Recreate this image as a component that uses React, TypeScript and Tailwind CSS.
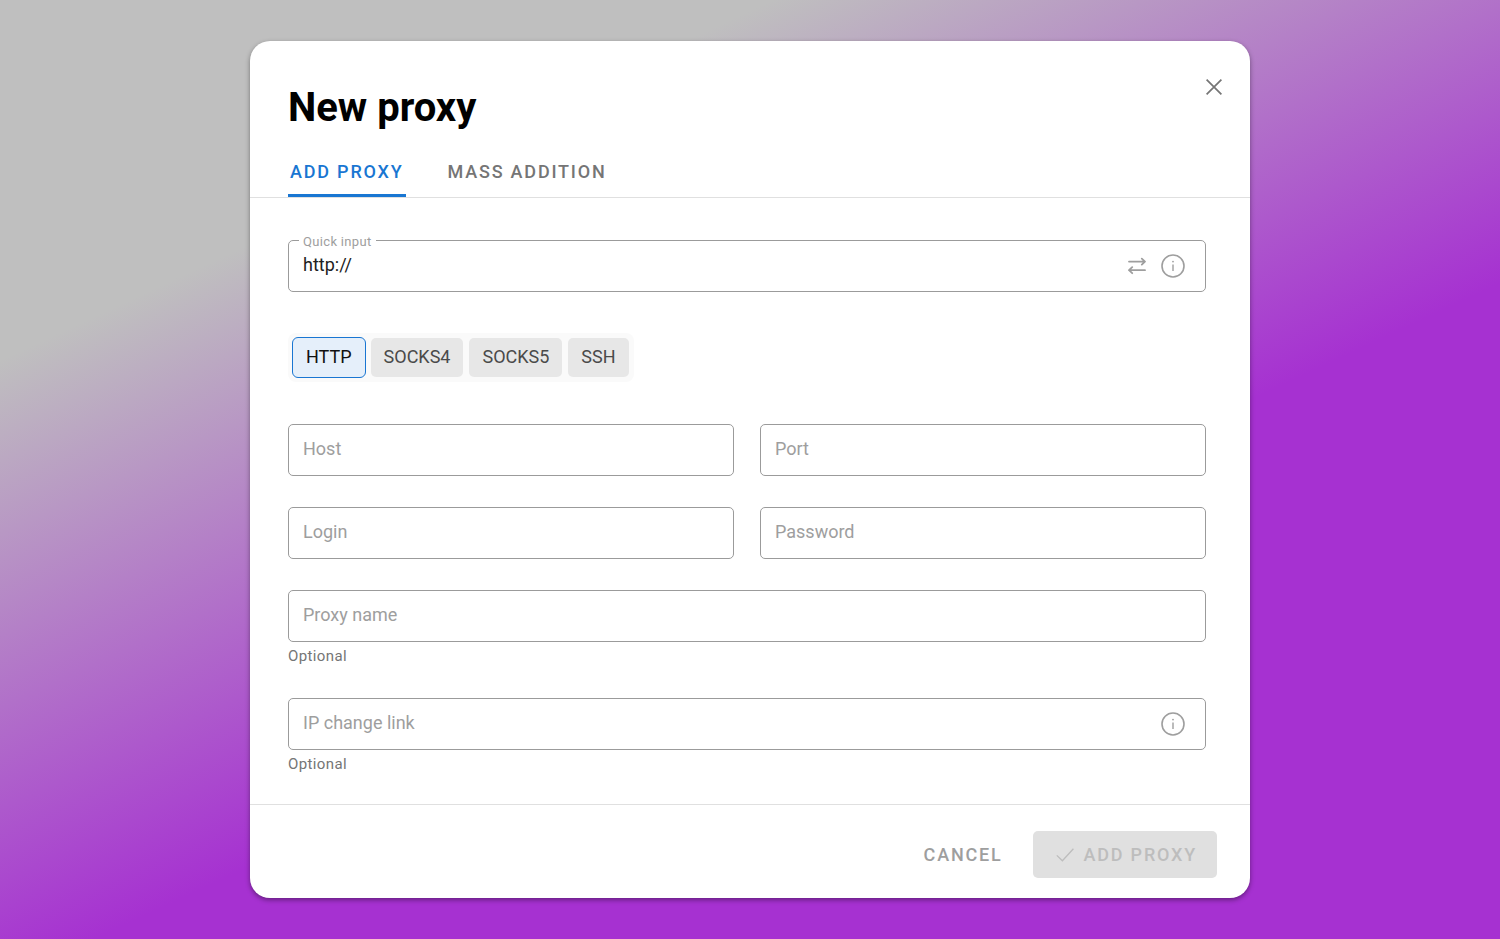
import React, { useState } from 'react';

const CloseIcon = () => (
  <svg className="size-4" viewBox="0 0 16 16" fill="none" stroke="currentColor" strokeWidth="1.7" aria-hidden="true">
    <path d="M0.6 0.6L15.4 15.4M15.4 0.6L0.6 15.4" />
  </svg>
);

const InfoIcon = () => (
  <svg className="size-6" viewBox="0 0 24 24" fill="none" stroke="currentColor" strokeWidth="1.6" aria-hidden="true">
    <circle cx="12" cy="12" r="11" />
    <path d="M12 10.4V17" strokeWidth="1.4" />
    <circle cx="12" cy="7.6" r="0.9" fill="currentColor" stroke="none" />
  </svg>
);

const SwapIcon = () => (
  <svg
    className="size-[18px]"
    viewBox="0 0 18 18"
    fill="none"
    stroke="currentColor"
    strokeWidth="1.8"
    strokeLinecap="round"
    strokeLinejoin="round"
    aria-hidden="true"
  >
    <path d="M1 4.6H17M13.8 1.6L17 4.6L13.8 7.6" />
    <path d="M17 13.2H1M4.2 10.2L1 13.2L4.2 16.2" />
  </svg>
);

const CheckIcon = () => (
  <svg className="size-[18px]" viewBox="0 0 18 18" fill="none" stroke="currentColor" strokeWidth="1.3" aria-hidden="true">
    <path d="M0.8 9.4L6.4 14.8L17.4 2.8" />
  </svg>
);

type FieldProps = {
  id: string;
  label: string;
  type?: string;
  defaultValue?: string;
  helper?: string;
  children?: React.ReactNode;
};

// The label sits inside an empty field and moves up onto the border once there is a value
const Field = ({ id, label, type = 'text', defaultValue, helper, children }: FieldProps) => (
  <div>
    <div className="relative flex items-center h-[52px] rounded-[5px] border border-[#9b9b9b] focus-within:border-[#1976d2]">
      <input
        id={id}
        type={type}
        defaultValue={defaultValue}
        placeholder=" "
        className="peer flex-1 min-w-0 h-full pl-[14px] pb-[3px] bg-transparent text-lg text-[#212121] outline-none"
      />
      <label
        htmlFor={id}
        className="absolute left-[10px] -top-[7px] px-1 bg-white text-[13px] leading-4 tracking-wide text-[#9e9e9e] pointer-events-none peer-placeholder-shown:top-2.5 peer-placeholder-shown:bg-transparent peer-placeholder-shown:text-lg peer-placeholder-shown:leading-7 peer-placeholder-shown:tracking-normal"
      >
        {label}
      </label>
      {children && <div className="flex items-center gap-[15px] pr-5 text-[#9e9e9e]">{children}</div>}
    </div>
    {helper && <p className="mt-1 text-[15px] leading-[21px] tracking-wide text-[#757575]">{helper}</p>}
  </div>
);

const tabs = ['Add proxy', 'Mass addition'];
const protocols = ['HTTP', 'SOCKS4', 'SOCKS5', 'SSH'];

const App = () => {
  const [tab, setTab] = useState(tabs[0]);
  const [protocol, setProtocol] = useState(protocols[0]);

  return (
    <div className="min-h-screen flex items-center justify-center bg-[linear-gradient(155deg,#bfbfbf_22%,#a631d1_60%)] font-[Roboto,sans-serif]">
      <div
        role="dialog"
        aria-labelledby="dialog-title"
        className="w-full max-w-[1000px] rounded-[20px] bg-white shadow-[0_2px_5px_rgba(0,0,0,0.4)]"
      >
        <header className="pt-[38px] pl-[38px] pr-7 border-b border-[#e0e0e0]">
          <div className="flex items-start justify-between">
            <h1 id="dialog-title" className="text-[40px] leading-[58px] font-bold text-black">
              New proxy
            </h1>
            <button type="button" aria-label="Close" className="text-[#757575]">
              <CloseIcon />
            </button>
          </div>
          <div role="tablist" className="mt-2.5 flex gap-10">
            {tabs.map((name) => (
              <button
                key={name}
                type="button"
                role="tab"
                aria-selected={tab === name}
                onClick={() => setTab(name)}
                className={`h-[50px] px-0.5 border-y-3 border-t-transparent text-lg font-medium uppercase tracking-widest ${
                  tab === name ? 'border-b-[#1976d2] text-[#1976d2]' : 'border-b-transparent text-[#757575]'
                }`}
              >
                {name}
              </button>
            ))}
          </div>
        </header>

        <form id="proxy-form" className="pt-[42px] pb-[29px] pl-[38px] pr-11">
          <Field id="quick-input" label="Quick input" defaultValue="http://">
            <button type="button" aria-label="Swap format">
              <SwapIcon />
            </button>
            <button type="button" aria-label="Supported formats">
              <InfoIcon />
            </button>
          </Field>

          <div className="mt-[41px] w-fit flex gap-1 p-1 rounded-lg bg-[#fafafa]">
            {protocols.map((name) => (
              <button
                key={name}
                type="button"
                aria-pressed={protocol === name}
                onClick={() => setProtocol(name)}
                className={`h-[41px] px-[13px] pb-0.5 rounded-md border text-lg ${
                  protocol === name
                    ? 'border-[#1976d2] bg-[#e5effa] text-[#111111]'
                    : 'border-transparent bg-clip-padding bg-[#e7e7e7] text-[#4a4a4a]'
                }`}
              >
                {name}
              </button>
            ))}
          </div>

          <div className="mt-[42px] flex flex-col gap-[31px]">
            <div className="grid grid-cols-2 gap-x-[26px] gap-y-[31px]">
              <Field id="host" label="Host" />
              <Field id="port" label="Port" />
              <Field id="login" label="Login" />
              <Field id="password" label="Password" type="password" />
            </div>
            <Field id="proxy-name" label="Proxy name" helper="Optional" />
            <Field id="ip-change-link" label="IP change link" helper="Optional">
              <button type="button" aria-label="About the IP change link">
                <InfoIcon />
              </button>
            </Field>
          </div>
        </form>

        <footer className="flex justify-end gap-[14px] pt-[26px] pb-5 pr-[33px] border-t border-[#e0e0e0]">
          <button type="button" className="h-[47px] px-4 text-lg font-medium uppercase tracking-widest text-[#9e9e9e]">
            Cancel
          </button>
          <button
            type="submit"
            form="proxy-form"
            disabled
            className="flex items-center gap-[10px] h-[47px] pl-[23px] pr-5 rounded-[5px] bg-[#e0e0e0] text-lg font-medium uppercase tracking-widest text-[#bdbdbd]"
          >
            <CheckIcon />
            Add proxy
          </button>
        </footer>
      </div>
    </div>
  );
};

export default App;
